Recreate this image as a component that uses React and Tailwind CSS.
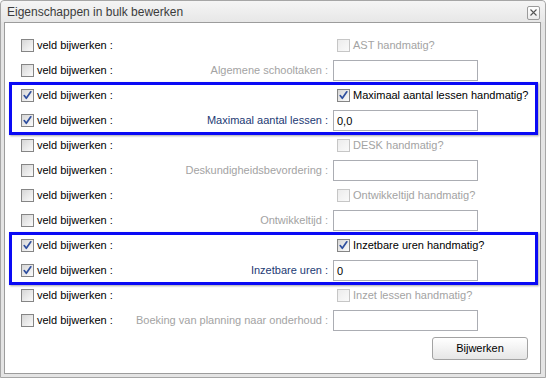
import React from 'react';

const rows = [
  { on: false, kind: 'check', text: 'AST handmatig?', active: false },
  { on: false, kind: 'field', text: 'Algemene schooltaken :', active: false, value: '' },
  { on: true, kind: 'check', text: 'Maximaal aantal lessen handmatig?', active: true, group: 'a' },
  { on: true, kind: 'field', text: 'Maximaal aantal lessen :', active: true, value: '0,0', group: 'a' },
  { on: false, kind: 'check', text: 'DESK handmatig?', active: false },
  { on: false, kind: 'field', text: 'Deskundigheidsbevordering :', active: false, value: '' },
  { on: false, kind: 'check', text: 'Ontwikkeltijd handmatig?', active: false },
  { on: false, kind: 'field', text: 'Ontwikkeltijd :', active: false, value: '' },
  { on: true, kind: 'check', text: 'Inzetbare uren handmatig?', active: true, group: 'b' },
  { on: true, kind: 'field', text: 'Inzetbare uren :', active: true, value: '0', group: 'b' },
  { on: false, kind: 'check', text: 'Inzet lessen handmatig?', active: false },
  { on: false, kind: 'field', text: 'Boeking van planning naar onderhoud :', active: false, value: '' },
];

function Checkbox({ checked, disabled }) {
  return (
    <span
      className={
        disabled
          ? 'relative w-[13px] h-[13px] shrink-0 border border-[#c6c6c6] bg-gradient-to-br from-[#ececec] to-[#fafafa]'
          : 'relative w-[13px] h-[13px] shrink-0 border border-[#858585] bg-gradient-to-br from-[#d6d6d6] to-[#fbfbfb]'
      }
    >
      {checked && (
        <svg width="11" height="11" viewBox="0 0 11 11" className="absolute left-0 top-0">
          <path d="M2.2 5.6 L4.3 8.3 L8.8 1.8" fill="none" stroke="#2f4f9f" strokeWidth="1.7" strokeLinecap="round" strokeLinejoin="round" />
        </svg>
      )}
    </span>
  );
}

function Row({ row }) {
  const labelColor = row.active ? 'text-[#1c3a74]' : 'text-[#a3a3a3]';
  return (
    <div className="flex items-center h-[25px] pl-[16px]">
      <div className="w-[308px] flex items-center justify-between">
        <div className="flex items-center gap-[3px] text-black">
          <Checkbox checked={row.on} />
          <span>veld bijwerken :</span>
        </div>
        {row.kind === 'field' && <span className={labelColor + ' pr-[1px]'}>{row.text}</span>}
      </div>
      <div className="ml-[4px] flex items-center">
        {row.kind === 'check' ? (
          <div className="flex items-center gap-[3px] pl-[4px]">
            <Checkbox checked={row.on} disabled={!row.active} />
            <span className={row.active ? 'text-black' : 'text-[#a3a3a3]'}>{row.text}</span>
          </div>
        ) : (
          <input
            readOnly
            value={row.value}
            className="w-[145px] h-[21px] border border-[#abadb3] bg-white pl-[3px] text-[11px] text-black outline-none font-['Liberation_Sans',Arial,sans-serif]"
          />
        )}
      </div>
    </div>
  );
}

function Group({ items }) {
  return (
    <div className="relative">
      {items.map((r, i) => (
        <Row key={i} row={r} />
      ))}
      <div className="absolute left-[4px] right-[2px] top-[-1px] bottom-[-2px] border-[3px] border-[#0a0af5] shadow-[1px_1px_2px_rgba(0,0,0,0.35)] pointer-events-none" />
    </div>
  );
}

export default function App() {
  const blocks = [];
  let i = 0;
  while (i < rows.length) {
    const r = rows[i];
    if (r.group) {
      blocks.push(<Group key={i} items={[rows[i], rows[i + 1]]} />);
      i += 2;
    } else {
      blocks.push(<Row key={i} row={r} />);
      i += 1;
    }
  }

  return (
    <div className="w-[546px] h-[378px] flex flex-col bg-[#e4e4e4] border border-[#a6a6a6] rounded-t-[4px] text-[11px] font-['Liberation_Sans',Arial,sans-serif]">
      <div className="h-[21px] flex items-center justify-between pl-[6px] pr-[5px] bg-gradient-to-b from-[#f5f5f5] to-[#e7e7e7] rounded-t-[4px]">
        <span className="text-[12px] text-[#3b3b3b]">Eigenschappen in bulk bewerken</span>
        <span className="w-[13px] h-[14px] mt-[2px] border border-[#9b9b9b] rounded-[2px] bg-gradient-to-b from-white to-[#ececec] flex items-center justify-center">
          <svg width="9" height="9" viewBox="0 0 9 9">
            <path d="M1.5 1.5 L7.5 7.5 M7.5 1.5 L1.5 7.5" stroke="#555" strokeWidth="1.1" />
          </svg>
        </span>
      </div>
      <div className="flex-1 ml-[3px] mr-[4px] mb-[3px] bg-white border border-[#9c9c9c] pt-[10px]">
        {blocks}
        <div className="flex justify-end pr-[12px] mt-[4px]">
          <button className="w-[96px] h-[23px] border border-[#a3a3a3] rounded-[3px] bg-gradient-to-b from-white to-[#e6e6e6] text-[11px] text-black font-['Liberation_Sans',Arial,sans-serif]">
            Bijwerken
          </button>
        </div>
      </div>
    </div>
  );
}
